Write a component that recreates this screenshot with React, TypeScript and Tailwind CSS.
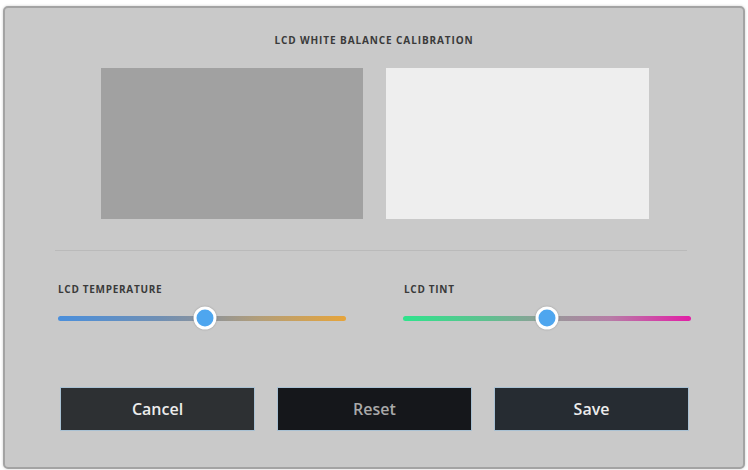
import React from 'react';

const font = { fontFamily: '"Open Sans", "Liberation Sans", sans-serif' };

function Slider({ value, track }: { value: number; track: string }) {
  return (
    <div className="relative h-6 w-[288px] flex items-center">
      <div className={`h-[5px] w-full rounded-full ${track}`} />
      <div
        className="absolute top-1/2 h-[23px] w-[23px] -translate-x-1/2 -translate-y-1/2 rounded-full bg-white p-[3px] shadow-[0_0_2px_rgba(0,0,0,0.25)]"
        style={{ left: `${value * 100}%` }}
      >
        <div className="h-full w-full rounded-full bg-[#4ea6ef]" />
      </div>
    </div>
  );
}

export default function App() {
  return (
    <div className="min-h-screen w-full bg-white pl-[3px] pt-[6px]" style={font}>
      <div className="flex h-[463px] w-[742px] flex-col rounded-[5px] border-2 border-[#a3a3a3] bg-[#c9c9c9] shadow-[0_0_3px_rgba(0,0,0,0.2)]">
        <h1 className="mt-[26px] text-center text-[10px] font-bold leading-[12px] tracking-[0.09em] text-[#3a3a3a]">
          LCD WHITE BALANCE CALIBRATION
        </h1>
        <div className="mt-[22px] flex justify-center gap-[23px] pl-[2px]">
          <div className="h-[151px] w-[262px] bg-[#a1a1a1]" />
          <div className="h-[151px] w-[263px] bg-[#eeeeee]" />
        </div>
        <div className="ml-[50px] mt-[31px] h-px w-[632px] bg-[#bababa]" />
        <div className="ml-[53px] mt-[32px] flex gap-[57px]">
          <div className="flex flex-col">
            <span className="text-[10px] font-bold leading-[12px] tracking-[0.07em] text-[#3a3a3a]">LCD TEMPERATURE</span>
            <div className="mt-[11px]">
              <Slider value={0.512} track="bg-[linear-gradient(90deg,#4a8fdc_0%,#6f8fb4_35%,#8d939a_52%,#b39e78_70%,#e6a43a_100%)]" />
            </div>
          </div>
          <div className="flex flex-col">
            <span className="ml-px text-[10px] font-bold leading-[12px] tracking-[0.07em] text-[#3a3a3a]">LCD TINT</span>
            <div className="mt-[11px]">
              <Slider value={0.5} track="bg-[linear-gradient(90deg,#2fe38c_0%,#5fbf8f_30%,#959a98_50%,#b77ca6_72%,#e21ea6_100%)]" />
            </div>
          </div>
        </div>
        <div className="ml-[55px] mt-[57px] flex gap-[22px]">
          <button className="h-[44px] w-[195px] border border-[#a9c1d3] bg-[#2d3033] text-[16px] font-semibold text-[#ececec]">
            Cancel
          </button>
          <button className="h-[44px] w-[195px] border border-[#a9c1d3] bg-[#15171b] text-[16px] font-semibold text-[#a9a9a9]">
            Reset
          </button>
          <button className="h-[44px] w-[195px] border border-[#a9c1d3] bg-[#262c32] text-[16px] font-semibold text-[#ececec]">
            Save
          </button>
        </div>
      </div>
    </div>
  );
}
